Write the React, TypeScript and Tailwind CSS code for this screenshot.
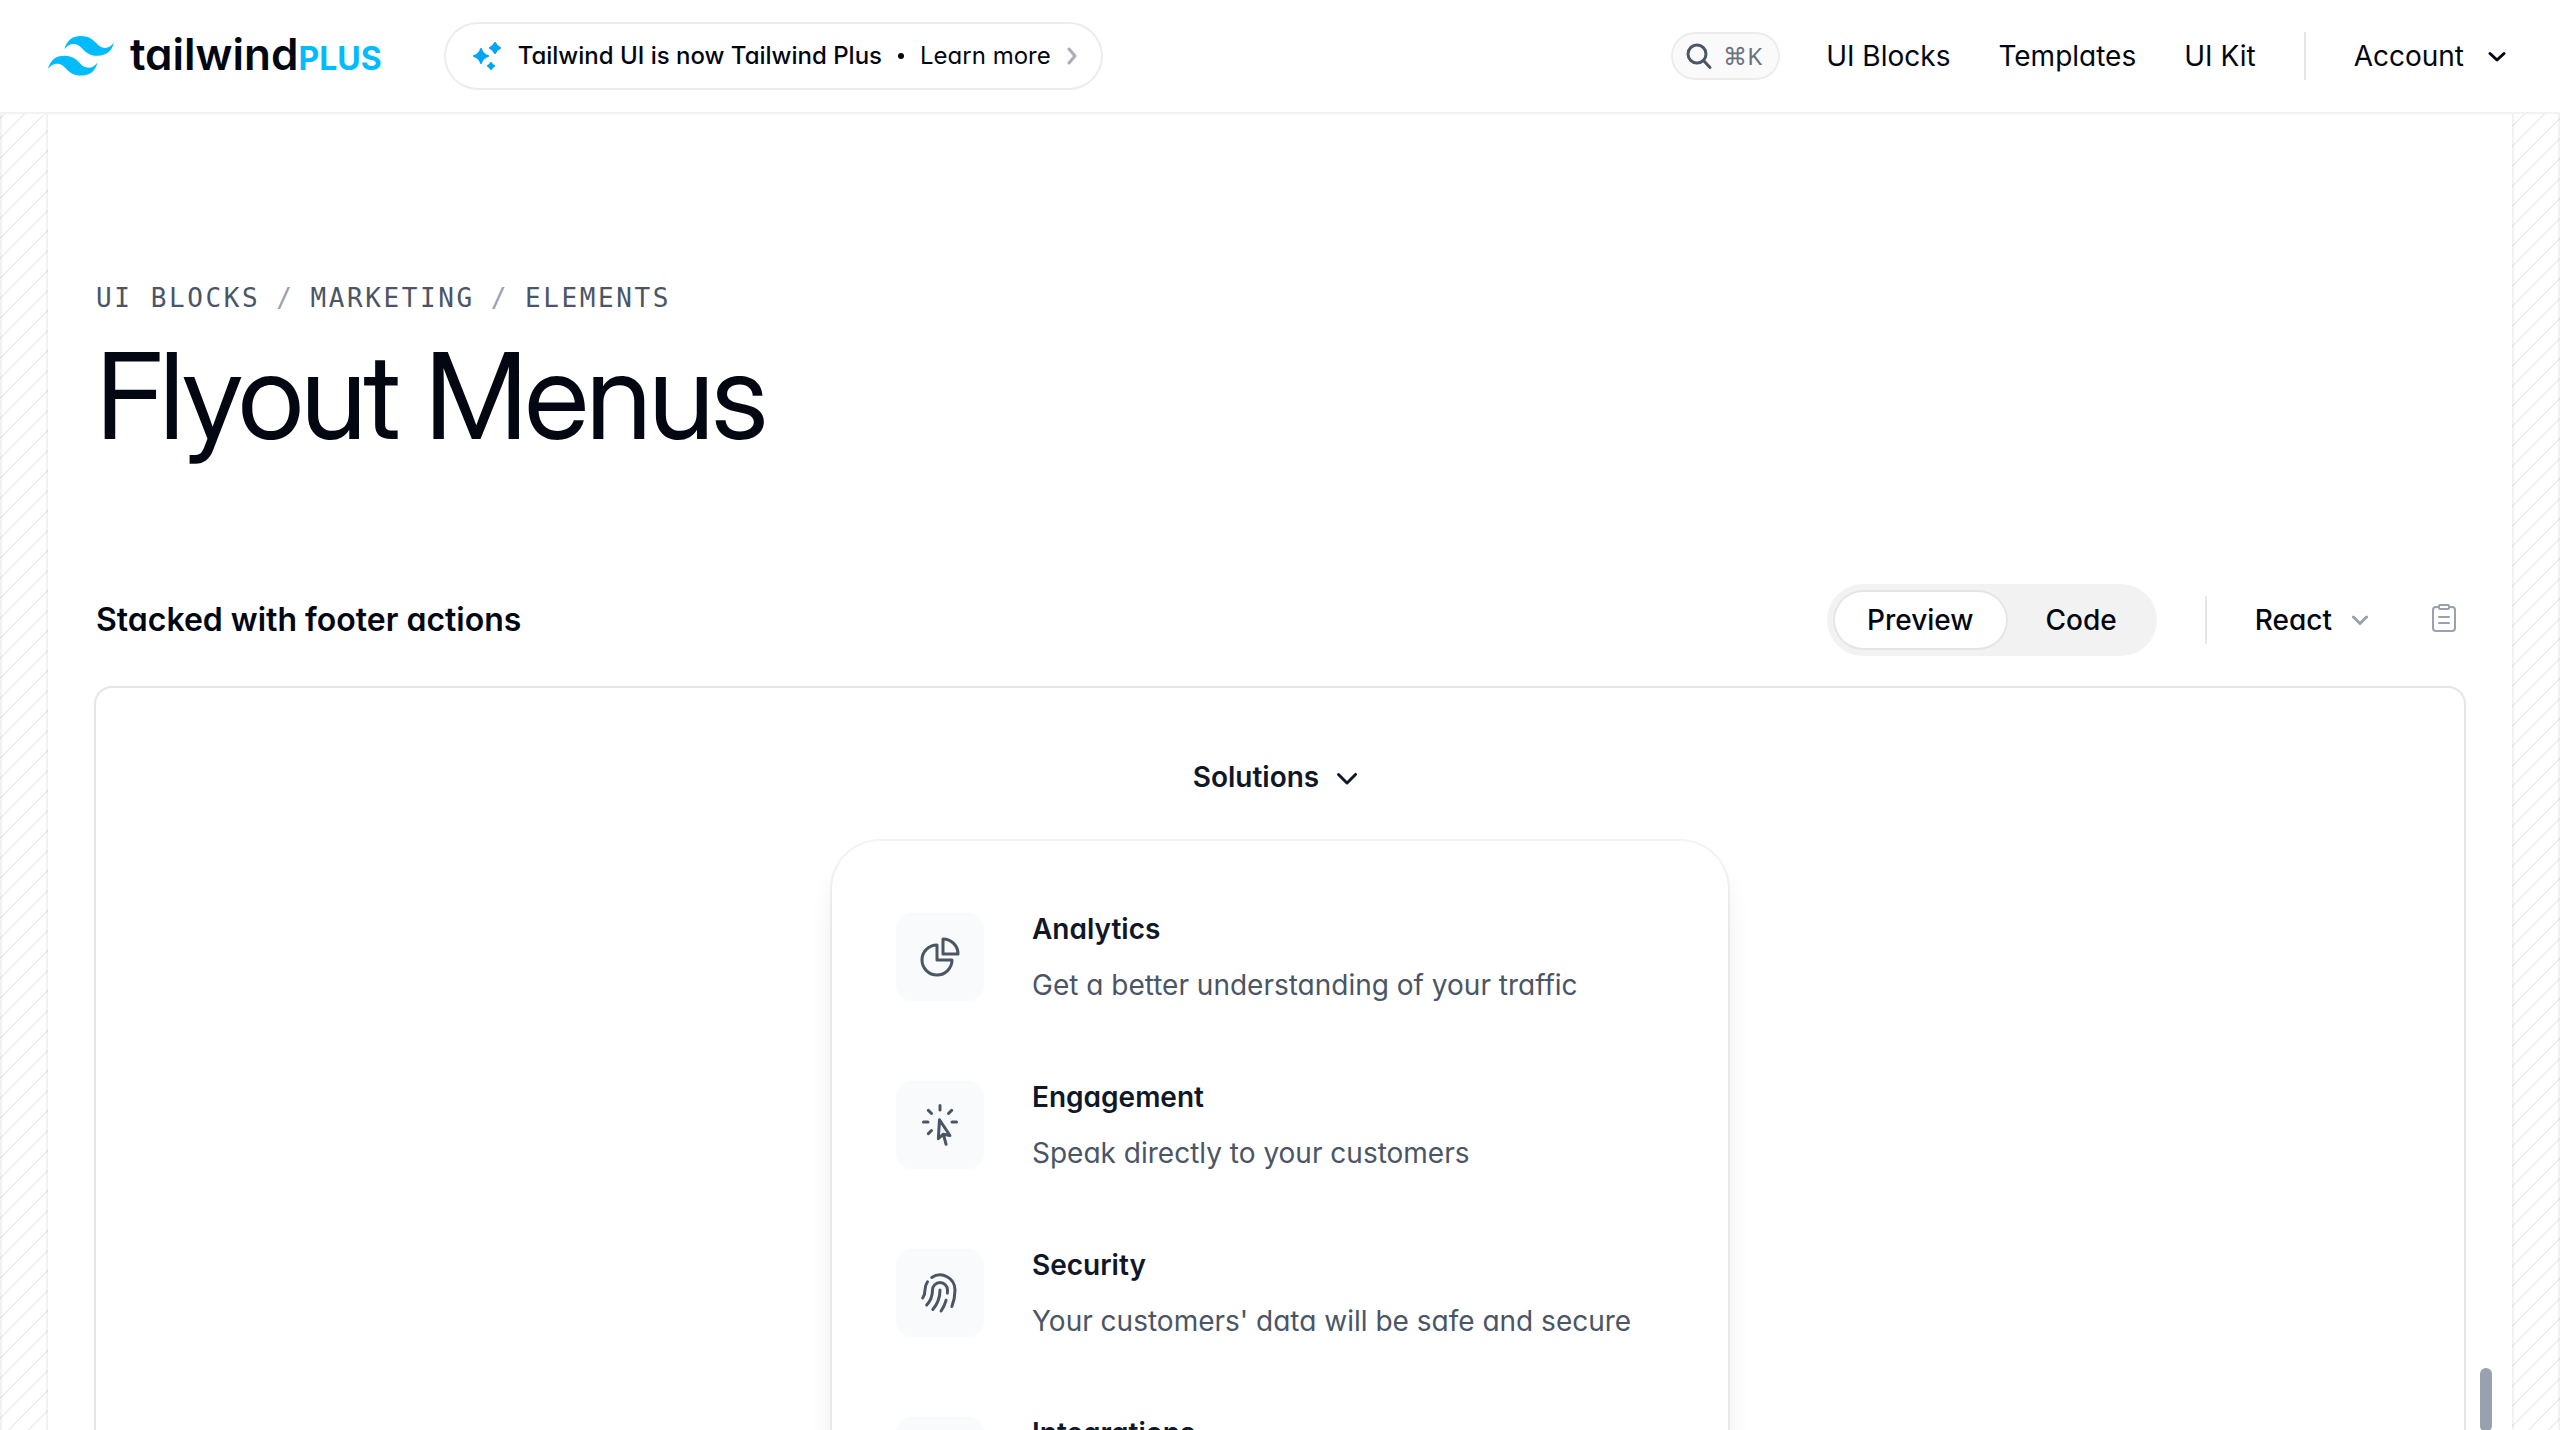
import type { ComponentType } from 'react'
import {
  HiMiniChevronDown,
  HiOutlineChartPie,
  HiOutlineCursorArrowRays,
  HiOutlineFingerPrint,
  HiOutlineSquaresPlus,
} from 'react-icons/hi2'

const hatch =
  'w-12 shrink-0 border-x-2 border-gray-950/5 bg-[repeating-linear-gradient(315deg,rgba(3,7,18,0.07)_0,rgba(3,7,18,0.07)_2px,transparent_0,transparent_50%)] bg-[size:20px_20px] bg-fixed'

type Solution = {
  name: string
  description: string
  icon: ComponentType<{ className?: string }>
}

const solutions: Solution[] = [
  { name: 'Analytics', description: 'Get a better understanding of your traffic', icon: HiOutlineChartPie },
  { name: 'Engagement', description: 'Speak directly to your customers', icon: HiOutlineCursorArrowRays },
  { name: 'Security', description: "Your customers' data will be safe and secure", icon: HiOutlineFingerPrint },
  { name: 'Integrations', description: 'Connect with third-party tools', icon: HiOutlineSquaresPlus },
]

const crumbs = ['UI Blocks', 'Marketing', 'Elements']

function Logo() {
  return (
    <a href="#" aria-label="Tailwind Plus" className="flex items-center gap-4 whitespace-nowrap">
      <svg viewBox="0 0 54 33" className="w-[66px]" fill="#00bcff" aria-hidden="true">
        <path
          fillRule="evenodd"
          clipRule="evenodd"
          d="M27 0c-7.2 0-11.7 3.6-13.5 10.8 2.7-3.6 5.85-4.95 9.45-4.05 2.054.513 3.522 2.004 5.147 3.653C30.744 13.09 33.808 16.2 40.5 16.2c7.2 0 11.7-3.6 13.5-10.8-2.7 3.6-5.85 4.95-9.45 4.05-2.054-.513-3.522-2.004-5.147-3.653C36.756 3.11 33.692 0 27 0zM13.5 16.2C6.3 16.2 1.8 19.8 0 27c2.7-3.6 5.85-4.95 9.45-4.05 2.054.514 3.522 2.004 5.147 3.653C17.244 29.29 20.308 32.4 27 32.4c7.2 0 11.7-3.6 13.5-10.8-2.7 3.6-5.85 4.95-9.45 4.05-2.054-.513-3.522-2.004-5.147-3.653C23.256 19.31 20.192 16.2 13.5 16.2z"
        />
      </svg>
      <span className="flex items-baseline pb-1 text-[44px] leading-none font-semibold">
        tailwind
        <span className="text-[32px] leading-none font-bold text-[#00bcff]">PLUS</span>
      </span>
    </a>
  )
}

function Sparkles() {
  return (
    <svg viewBox="0 0 32 32" className="size-8" fill="#00a6f4" stroke="#00a6f4" strokeWidth="2" strokeLinejoin="round" aria-hidden="true">
      <path d="M11 9Q12.500 14.500 18 16Q12.500 17.500 11 23Q9.500 17.500 4 16Q9.500 14.500 11 9Z" />
      <path d="M25 3Q26.500 6.500 30 8Q26.500 9.500 25 13Q23.500 9.500 20 8Q23.500 6.500 25 3Z" />
      <path d="M21 23Q22 25 24 26Q22 27 21 29Q20 27 18 26Q20 25 21 23Z" />
    </svg>
  )
}

function Header() {
  return (
    <header className="flex items-center justify-between border-b-2 border-gray-950/5 px-12 py-6">
      <div className="flex items-center gap-16">
        <Logo />
        <a
          href="#"
          className="flex h-16 items-center rounded-full px-6 text-2xl whitespace-nowrap ring-2 ring-gray-950/8"
        >
          <Sparkles />
          <span className="ml-4 font-medium">Tailwind UI is now Tailwind Plus</span>
          <span className="mx-4 size-1.5 rounded-full bg-gray-950" aria-hidden="true" />
          <span>Learn more</span>
          <svg viewBox="0 0 10 20" className="ml-4 h-5 w-2.5" fill="none" stroke="#a9adb5" strokeWidth="3" strokeLinecap="round" strokeLinejoin="round" aria-hidden="true">
            <path d="M2 3l6 7-6 7" />
          </svg>
        </a>
      </div>
      <div className="flex items-center gap-12 text-[28px] leading-[48px] whitespace-nowrap">
        <button
          type="button"
          aria-label="Search"
          className="flex h-11 items-center gap-2.5 rounded-full bg-gray-950/2 pr-4 pl-3 text-2xl text-gray-500 ring-2 ring-gray-950/8"
        >
          <svg viewBox="0 0 28 28" className="size-7" fill="none" stroke="#4a5565" strokeWidth="3" strokeLinecap="round" aria-hidden="true">
            <circle cx="12" cy="12" r="9" />
            <path d="M18.500 18.500l6.500 7" />
          </svg>
          <kbd className="font-sans">⌘K</kbd>
        </button>
        <nav className="flex items-center gap-12">
          <a href="#">UI Blocks</a>
          <a href="#">Templates</a>
          <a href="#">UI Kit</a>
        </nav>
        <div className="h-12 w-0.5 bg-gray-950/10" />
        <button type="button" className="flex items-center gap-6">
          Account
          <svg viewBox="0 0 20 20" className="mr-1 size-5" fill="none" stroke="#030712" strokeWidth="3" strokeLinecap="round" strokeLinejoin="round" aria-hidden="true">
            <path d="M2 7.500l7 6.500 7-6.500" />
          </svg>
        </button>
      </div>
    </header>
  )
}

function Toolbar() {
  return (
    <div className="flex items-center justify-between">
      <h2 className="text-[32px] leading-[48px] font-semibold">
        <a href="#">Stacked with footer actions</a>
      </h2>
      <div className="flex items-center gap-12 text-[28px] leading-[56px] font-medium">
        <div role="tablist" className="flex gap-2 rounded-full bg-gray-950/5 p-2">
          <button type="button" role="tab" aria-selected="true" className="rounded-full bg-white px-8 ring-2 ring-gray-950/5">
            Preview
          </button>
          <button type="button" role="tab" aria-selected="false" className="rounded-full px-8">
            Code
          </button>
        </div>
        <div className="h-12 w-0.5 bg-gray-950/10" />
        <button type="button" className="flex items-center gap-5">
          React
          <svg viewBox="0 0 16 16" className="size-4" fill="none" stroke="#99a1af" strokeWidth="3" strokeLinecap="round" strokeLinejoin="round" aria-hidden="true">
            <path d="M1.500 5l6.500 6.500 6.500-6.500" />
          </svg>
        </button>
        <button type="button" aria-label="Copy code" className="pr-2 pb-1 pl-4">
          <svg viewBox="0 0 24 28" className="h-7 w-6" fill="none" stroke="#99a1af" strokeWidth="2" strokeLinecap="round" strokeLinejoin="round" aria-hidden="true">
            <path d="M7 3H4a3 3 0 0 0-3 3v18a3 3 0 0 0 3 3h16a3 3 0 0 0 3-3V6a3 3 0 0 0-3-3h-3" />
            <rect x="7" y="1" width="10" height="4" rx="1" />
            <path d="M7 13h10M7 19h10" />
          </svg>
        </button>
      </div>
    </div>
  )
}

function FlyoutMenu() {
  return (
    <div className="flex flex-col items-center gap-10 px-16 pt-[65px]">
      <button type="button" aria-expanded="true" className="flex items-center gap-2 text-[28px] leading-[48px] font-semibold text-gray-900">
        Solutions
        <HiMiniChevronDown className="size-10" />
      </button>
      <ul className="w-full max-w-4xl rounded-[48px] bg-white p-8 text-[28px] leading-[48px] shadow-[0_20px_30px_-6px_rgba(0,0,0,0.1),0_8px_12px_-8px_rgba(0,0,0,0.1)] ring-2 ring-gray-900/5">
        {solutions.map(({ name, description, icon: Icon }) => (
          <li key={name} className="flex gap-12 p-8">
            <div className="mt-2 flex size-[88px] shrink-0 items-center justify-center rounded-2xl bg-gray-50">
              <Icon className="size-12 text-gray-600" />
            </div>
            <div>
              <a href="#" className="font-semibold text-gray-900">
                {name}
              </a>
              <p className="mt-2 text-gray-600">{description}</p>
            </div>
          </li>
        ))}
      </ul>
    </div>
  )
}

export default function App() {
  return (
    <div className="flex h-screen flex-col overflow-hidden bg-white font-[Inter,sans-serif] text-gray-950 antialiased [font-feature-settings:'cv11']">
      <Header />
      <div className="flex min-h-0 flex-1">
        <div className={hatch} />
        <main className="min-w-0 flex-1 px-12 pt-40">
          <nav aria-label="Breadcrumb">
            <ol className="flex gap-4 font-['DejaVu_Sans_Mono',monospace] text-[26px] leading-[48px] tracking-widest text-gray-600 uppercase">
              {crumbs.map((crumb, i) => (
                <li key={crumb} className="flex gap-4">
                  {i > 0 && <span className="text-gray-400">/</span>}
                  <a href="#">{crumb}</a>
                </li>
              ))}
            </ol>
          </nav>
          <h1 className="mt-3.5 font-['Inter_Display',Inter,sans-serif] text-[120px] leading-[120px] tracking-tight">Flyout Menus</h1>
          <section className="mt-32">
            <Toolbar />
            <div className="relative mt-8 h-[1424px] rounded-2xl ring-2 ring-gray-950/10">
              <FlyoutMenu />
              <div className="absolute top-1/2 -right-7 h-16 w-3 -translate-y-1/2 rounded-full bg-gray-400" />
            </div>
          </section>
        </main>
        <div className={hatch} />
      </div>
    </div>
  )
}
